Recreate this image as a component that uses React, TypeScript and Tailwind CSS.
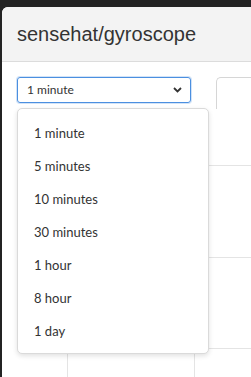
import React from 'react';

const options = ['1 minute', '5 minutes', '10 minutes', '30 minutes', '1 hour', '8 hour', '1 day'];

export default function App() {
    return (
        <div className="w-[251px] h-[377px] overflow-hidden bg-[#232323] pl-[2px] pt-[7px]">
            <div className="h-full bg-white rounded-tl-[6px] overflow-hidden relative" style={{ fontFamily: 'Lato, "Open Sans", sans-serif' }}>
                {/* Header */}
                <div className="h-[55px] bg-[#f3f3f3] border-b border-[#dcdcdc] flex items-center pl-[15px]">
                    <h1 className="text-[20px] text-[#333] pb-[1px]" style={{ fontFamily: '"Liberation Sans", Arial, sans-serif' }}>
                        sensehat/gyroscope
                    </h1>
                </div>

                {/* Controls */}
                <div className="flex items-start pt-[15px] pl-[15px] gap-[25px]">
                    <div className="w-[195px] h-[26px] border border-[#4b8fe0] rounded-[3px] flex items-center justify-between pl-[9px] pr-[8px] shadow-[0_0_0_1px_rgba(75,143,224,0.25)]">
                        <span className="text-[12px] text-[#333]">1 minute</span>
                        <svg width="9" height="6" viewBox="0 0 9 6" fill="none">
                            <path d="M1 1l3.5 3.5L8 1" stroke="#333" strokeWidth="1.8" />
                        </svg>
                    </div>
                    <div className="w-[40px] h-[32px] border-l border-t border-[#d6d6d6] rounded-tl-[5px]"></div>
                </div>

                {/* Chart grid behind */}
                <div className="ml-[15px]">
                    <div className="h-[57px] border-b border-[#e4e4e4]"></div>
                    <div className="h-[92px] border-b border-[#e4e4e4]"></div>
                    <div className="h-[91px] border-b border-[#e4e4e4]"></div>
                    <div className="h-[40px] flex">
                        <div className="w-[51px] border-r border-[#e4e4e4]"></div>
                        <div className="w-[127px] border-r border-[#e4e4e4]"></div>
                    </div>
                </div>

                {/* Dropdown menu */}
                <div className="absolute left-[15px] top-[101px] w-[192px] h-[246px] bg-white border border-[#dadada] rounded-[5px] shadow-[0_2px_5px_rgba(0,0,0,0.12)] pt-[8px]">
                    {options.map((o) => (
                        <div key={o} className="h-[33px] flex items-center pl-[16px] text-[13px] text-[#333]">
                            {o}
                        </div>
                    ))}
                </div>
            </div>
        </div>
    );
}
